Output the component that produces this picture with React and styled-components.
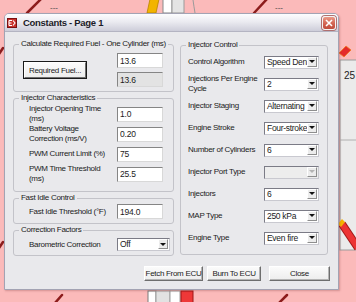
import React from "react";
import styled, { createGlobalStyle } from "styled-components";

const UI_FONT = `"Liberation Sans", Arial, sans-serif`;

const GlobalStyle = createGlobalStyle`
  * { box-sizing: border-box; }
  html, body { margin: 0; padding: 0; }
  body { background: #fbbaba; font-family: ${UI_FONT}; color: #1b1b1b; }
`;

const Desk = styled.div`
  position: relative;
  width: 356px;
  height: 302px;
  overflow: hidden;
  background: #fbbaba;
  padding: 13px 0 0 4px;
`;

const Backdrop = styled.svg`
  position: absolute;
  left: 0;
  top: 0;
`;

const Window = styled.div`
  position: relative;
  width: 335px;
  height: 277px;
  display: flex;
  flex-direction: column;
  background: #e9e9ec;
  border: 1px solid #a3a3b3;
  border-radius: 5px 5px 0 0;
  box-shadow: 1px 1px 2px rgba(120, 50, 50, 0.3);
`;

const TitleBar = styled.div`
  height: 18px;
  display: flex;
  align-items: center;
  gap: 6px;
  padding: 0 2px;
  background: linear-gradient(#fdfdfe, #ebebf1 45%, #cdcdd9);
  border-bottom: 1px solid #b4b4c2;
  border-radius: 4px 4px 0 0;
`;

const Title = styled.span`
  flex: 1;
  font-size: 9.5px;
  font-weight: bold;
  letter-spacing: -0.3px;
  color: #1c1c28;
  white-space: nowrap;
`;

const CloseBox = styled.span`
  width: 14px;
  height: 14px;
  display: flex;
  align-items: center;
  justify-content: center;
  border: 1px solid #f4f4f4;
  border-radius: 3px;
  background: linear-gradient(#eb9a88, #d0604e 60%, #c04c3c);
  box-shadow: 0 0 0 1px #b07070;
`;

const Body = styled.div`
  display: grid;
  grid-template-columns: 161px 148px;
  column-gap: 6px;
  padding: 7px 0 0 8px;
`;

const Column = styled.div`
  display: flex;
  flex-direction: column;
  gap: 1px;
`;

const Group = styled.fieldset`
  margin: ${p => p.$top || 0}px 0 0;
  height: ${p => p.$h}px;
  min-width: 0;
  padding: 0 ${p => p.$pr || 0}px 0 5px;
  border: 1px solid #c3c3c9;
  border-radius: 3px;
`;

const Legend = styled.legend`
  padding: 0 2px;
  font-size: 8px;
  line-height: 10px;
  letter-spacing: -0.3px;
  white-space: nowrap;
`;

const FuelRow = styled.div`
  display: flex;
  align-items: center;
  justify-content: space-between;
  padding: 4px 0 0 5px;
`;

const Stack = styled.div`
  display: flex;
  flex-direction: column;
  gap: 4px;
`;

const Field = styled.div`
  display: grid;
  grid-template-columns: ${p => p.$label}px auto;
  align-items: center;
  height: ${p => p.$rowH}px;
  padding-left: ${p => p.$indent}px;
  margin-top: ${p => p.$mt || 0}px;
`;

const Label = styled.span`
  font-size: 8px;
  line-height: 10px;
  letter-spacing: -0.3px;
  white-space: nowrap;
`;

const TextBox = styled.input`
  width: 46px;
  height: 15px;
  padding: 0 2px;
  border: 1px solid;
  border-color: #858585 #d8d8d8 #d8d8d8 #858585;
  background: ${p => (p.$muted ? "#e3e3e3" : "#fff")};
  font-family: ${UI_FONT};
  font-size: 8.5px;
  letter-spacing: -0.2px;
  color: #1b1b1b;
  outline: none;
`;

const Combo = styled.div`
  width: ${p => p.$w}px;
  height: 13px;
  display: flex;
  border: 1px solid;
  border-color: #7b7b86 #c9c9d0 #c9c9d0 #7b7b86;
  background: ${p => (p.$disabled ? "#ededed" : "#fff")};
`;

const ComboText = styled.span`
  flex: 1;
  overflow: hidden;
  padding-left: 2px;
  font-size: 8.5px;
  line-height: 11px;
  letter-spacing: -0.3px;
  white-space: nowrap;
`;

const ComboButton = styled.span`
  width: 10px;
  flex: none;
  margin: 0 1px 1px 0;
  display: flex;
  align-items: center;
  justify-content: center;
  background: #ececec;
  border: 1px solid;
  border-color: #ffffff #8e8e8e #8e8e8e #ffffff;

  &::after {
    content: "";
    border-left: 3px solid transparent;
    border-right: 3px solid transparent;
    border-top: 3px solid ${p => (p.$disabled ? "#b4b4b4" : "#111")};
  }
`;

const Button = styled.button`
  width: ${p => p.$w}px;
  height: ${p => p.$h || 15}px;
  margin-left: ${p => p.$push || 0}px;
  padding: 0;
  font-family: ${UI_FONT};
  font-size: 8px;
  letter-spacing: -0.3px;
  white-space: nowrap;
  color: #1b1b1b;
  background: linear-gradient(#fbfbfb, #ededed);
  border: 1px solid;
  border-color: #ffffff #6e6e6e #6e6e6e #ffffff;
  box-shadow: ${p =>
    p.$default ? "0 0 0 1px #1a1a1a" : "inset -1px -1px 0 #b4b4b4"};
`;

const Footer = styled.div`
  display: flex;
  justify-content: flex-end;
  gap: 4px;
  padding: 10px 8px 0 0;
`;

const Select = ({ value, w = 55, disabled }) => (
  <Combo $w={w} $disabled={disabled}>
    <ComboText>{value}</ComboText>
    <ComboButton $disabled={disabled} />
  </Combo>
);

const injectorRows = [
  ["Control Algorithm", "Speed Density"],
  [["Injections Per Engine", "Cycle"], "2"],
  ["Injector Staging", "Alternating"],
  ["Engine Stroke", "Four-stroke"],
  ["Number of Cylinders", "6"],
  ["Injector Port Type", "", true],
  ["Injectors", "6"],
  ["MAP Type", "250 kPa"],
  ["Engine Type", "Even fire"],
];

const characteristicRows = [
  [["Injector Opening Time", "(ms)"], "1.0"],
  [["Battery Voltage", "Correction (ms/V)"], "0.20"],
  ["PWM Current Limit (%)", "75"],
  [["PWM Time Threshold", "(ms)"], "25.5"],
];

const LabelText = ({ text }) =>
  Array.isArray(text) ? (
    <Label>
      {text[0]}
      <br />
      {text[1]}
    </Label>
  ) : (
    <Label>{text}</Label>
  );

const AppIcon = () => (
  <svg width="10" height="10" viewBox="0 0 10 10">
    <rect x="0.5" y="0.5" width="9" height="9" fill="#c8302a" stroke="#7a1010" />
    <path d="M2 2.5h3M2 5h2.5M2 7.5h3M2 2.5v5M6 2.5l2 2.5-2 2.5" stroke="#fff" strokeWidth="1.1" fill="none" />
  </svg>
);

const Gauges = () => (
  <Backdrop width="356" height="302" viewBox="0 0 356 302">
    <rect width="356" height="302" fill="#fbbaba" />
    <g stroke="#8c1c1c" strokeWidth="2.5" strokeLinecap="round">
      <line x1="27" y1="13" x2="41" y2="-1" />
      <line x1="254" y1="13" x2="267" y2="-1" />
      <line x1="55" y1="303" x2="62" y2="295" />
      <line x1="279" y1="303" x2="287" y2="295" />
      <line x1="-1" y1="54" x2="3" y2="48" />
      <line x1="-1" y1="248" x2="3" y2="242" />
    </g>
    <g fill="#444" fontFamily="Liberation Sans, sans-serif" fontSize="8">
      <text x="50" y="10">---</text>
      <text x="275" y="10">---</text>
    </g>
    <polygon points="147,13 150,-1 159,-1 156,13" fill="#f2b400" stroke="#b88400" strokeWidth="0.8" />
    <rect x="163" y="-2" width="9" height="15" fill="#fff" stroke="#8a8a8a" />
    <rect x="172" y="-2" width="12" height="15" fill="#e4e4e4" stroke="#9a9a9a" />
    <path d="M193 0 Q194 7 195 13" stroke="#9a9a9a" fill="none" />
    <rect x="148" y="291" width="8" height="14" fill="#fff" stroke="#7a7a7a" />
    <rect x="156" y="291" width="14" height="14" fill="#e2e2e2" stroke="#a0a0a0" />
    <rect x="170" y="291" width="10" height="14" fill="#fff" stroke="#a0a0a0" />
    <rect x="181" y="291" width="12" height="14" fill="#ee3838" stroke="#a01414" />
    <rect x="340" y="60" width="20" height="190" fill="#ebebeb" stroke="#9c9c9c" />
    <line x1="340" y1="140" x2="356" y2="140" stroke="#b0b0b0" />
    <text x="344" y="79" fill="#222" fontFamily="Liberation Sans, sans-serif" fontSize="10">25</text>
    <polygon points="339,53 346,46 351,50 344,57" fill="#e42a2a" stroke="#f07a20" strokeWidth="0.8" />
    <line x1="342" y1="224" x2="358" y2="248" stroke="#a01818" strokeWidth="8" />
    <line x1="342" y1="224" x2="358" y2="248" stroke="#ec3434" strokeWidth="6" />
    <polygon points="338,224 342,219 345,222 341,227" fill="#f5b400" />
  </Backdrop>
);

const App = () => {
  return (
    <Desk>
      <GlobalStyle />
      <Gauges />
      <Window>
        <TitleBar>
          <AppIcon />
          <Title>Constants - Page 1</Title>
          <CloseBox>
            <svg width="8" height="8" viewBox="0 0 8 8">
              <path d="M1 1l6 6M7 1l-6 6" stroke="#fff" strokeWidth="1.6" />
            </svg>
          </CloseBox>
        </TitleBar>
        <Body>
          <Column>
            <Group $h={53} $pr={10}>
              <Legend>Calculate Required Fuel - One Cylinder (ms)</Legend>
              <FuelRow>
                <Button $w={62} $h={16} $default>
                  Required Fuel...
                </Button>
                <Stack>
                  <TextBox readOnly value="13.6" />
                  <TextBox readOnly $muted value="13.6" />
                </Stack>
              </FuelRow>
            </Group>
            <Group $h={99} $pr={10}>
              <Legend>Injector Characteristics</Legend>
              {characteristicRows.map(([label, value], i) => (
                <Field key={i} $label={88} $rowH={20} $indent={10} $mt={i === 0 ? 1 : 0}>
                  <LabelText text={label} />
                  <TextBox readOnly value={value} />
                </Field>
              ))}
            </Group>
            <Group $h={31} $pr={10}>
              <Legend>Fast Idle Control</Legend>
              <Field $label={88} $rowH={15} $indent={10} $mt={1}>
                <Label>Fast Idle Threshold (°F)</Label>
                <TextBox readOnly value="194.0" />
              </Field>
            </Group>
            <Group $h={31}>
              <Legend>Correction Factors</Legend>
              <Field $label={88} $rowH={15} $indent={10} $mt={2}>
                <Label>Barometric Correction</Label>
                <Select value="Off" w={53} />
              </Field>
            </Group>
          </Column>
          <Group $h={215} $top={1}>
            <Legend>Injector Control</Legend>
            {injectorRows.map(([label, value, disabled], i) => (
              <Field key={i} $label={76} $rowH={22} $indent={2} $mt={i === 0 ? 1 : 0}>
                <LabelText text={label} />
                <Select value={value} disabled={disabled} />
              </Field>
            ))}
          </Group>
        </Body>
        <Footer>
          <Button $w={59}>Fetch From ECU</Button>
          <Button $w={54}>Burn To ECU</Button>
          <Button $w={61} $push={4}>
            Close
          </Button>
        </Footer>
      </Window>
    </Desk>
  );
};

export default App;
